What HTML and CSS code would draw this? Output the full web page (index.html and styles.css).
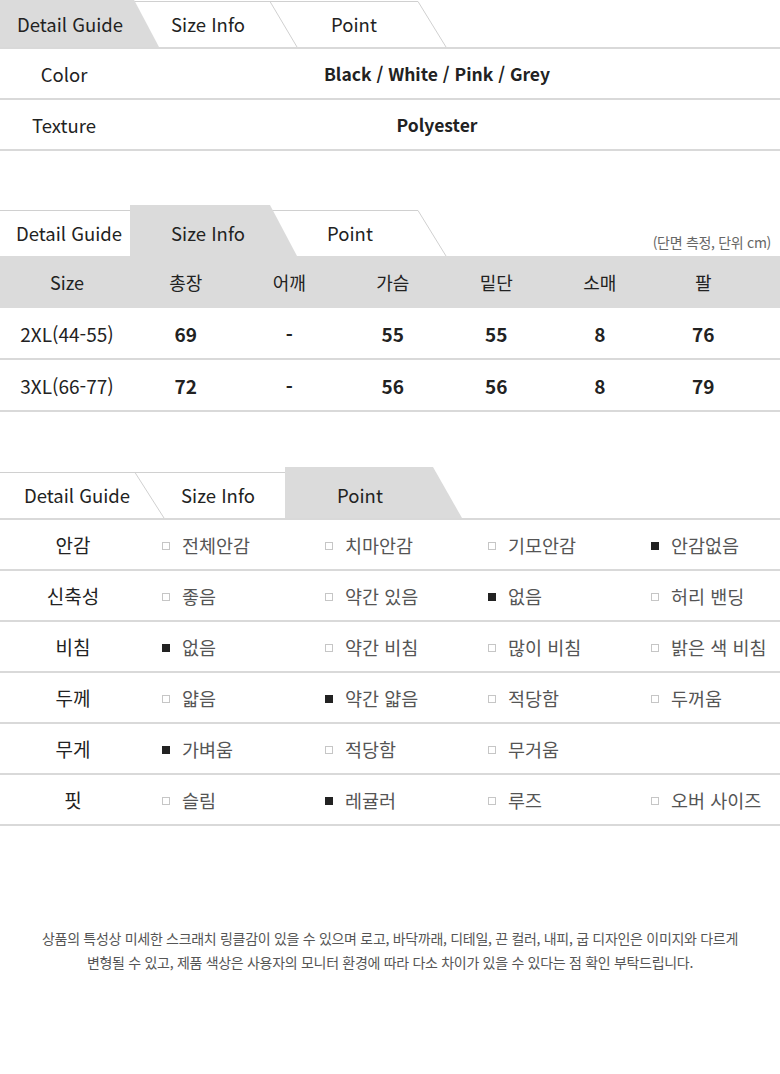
FILE: index.html
```html
<!DOCTYPE html>
<html lang="ko">
<head>
<meta charset="utf-8">
<title>Detail Guide</title>
<link rel="stylesheet" href="styles.css">
</head>
<body>
<div class="page">

  <section class="sec sec-detail">
    <div class="tabbar">
      <svg class="tabbg" width="780" height="51" viewBox="0 0 780 51" aria-hidden="true">
        <path class="tabline" d="M270 5.5 H418 L446 51"/>
        <path class="tabline" d="M132 5.5 H270 L297 51"/>
        <path class="tabfill" d="M0 0 H132 L159 51 H0 Z"/>
      </svg>
      <div class="tabs">
        <span class="tab t1">Detail Guide</span>
        <span class="tab t2">Size Info</span>
        <span class="tab t3">Point</span>
      </div>
    </div>
    <div class="info">
      <div class="info-row">
        <span class="info-label">Color</span>
        <span class="info-value">Black / White / Pink / Grey</span>
      </div>
      <div class="info-row">
        <span class="info-label">Texture</span>
        <span class="info-value">Polyester</span>
      </div>
    </div>
  </section>

  <section class="sec sec-size">
    <div class="tabbar">
      <svg class="tabbg" width="780" height="51" viewBox="0 0 780 51" aria-hidden="true">
        <path class="tabline" d="M270 5.5 H418 L446 51"/>
        <path class="tabline" d="M0 5.5 H140"/>
        <path class="tabfill" d="M130 0 H270 L297 51 H130 Z"/>
      </svg>
      <div class="tabs">
        <span class="tab t1">Detail Guide</span>
        <span class="tab t2">Size Info</span>
        <span class="tab t3">Point</span>
        <span class="note">(단면 측정, 단위 cm)</span>
      </div>
    </div>
    <div class="size-table">
      <div class="size-row size-head">
        <span class="head-en">Size</span><span>총장</span><span>어깨</span><span>가슴</span><span>밑단</span><span>소매</span><span>팔</span>
      </div>
      <div class="size-row">
        <span class="size-name">2XL(44-55)</span><span class="num">69</span><span class="num">-</span><span class="num">55</span><span class="num">55</span><span class="num">8</span><span class="num">76</span>
      </div>
      <div class="size-row">
        <span class="size-name">3XL(66-77)</span><span class="num">72</span><span class="num">-</span><span class="num">56</span><span class="num">56</span><span class="num">8</span><span class="num">79</span>
      </div>
    </div>
  </section>

  <section class="sec sec-point">
    <div class="tabbar">
      <svg class="tabbg" width="780" height="51" viewBox="0 0 780 51" aria-hidden="true">
        <path class="tabline" d="M135 5.5 H290"/>
        <path class="tabline" d="M0 5.5 H135 L164 51"/>
        <path class="tabfill" d="M285 0 H433 L462 51 H285 Z"/>
      </svg>
      <div class="tabs">
        <span class="tab t1">Detail Guide</span>
        <span class="tab t2">Size Info</span>
        <span class="tab t3">Point</span>
      </div>
    </div>
    <div class="point">
      <div class="point-row">
        <span class="point-label">안감</span>
        <span class="opt"><i class="cb"></i>전체안감</span>
        <span class="opt"><i class="cb"></i>치마안감</span>
        <span class="opt"><i class="cb"></i>기모안감</span>
        <span class="opt"><i class="cb on"></i>안감없음</span>
      </div>
      <div class="point-row">
        <span class="point-label">신축성</span>
        <span class="opt"><i class="cb"></i>좋음</span>
        <span class="opt"><i class="cb"></i>약간 있음</span>
        <span class="opt"><i class="cb on"></i>없음</span>
        <span class="opt"><i class="cb"></i>허리 밴딩</span>
      </div>
      <div class="point-row">
        <span class="point-label">비침</span>
        <span class="opt"><i class="cb on"></i>없음</span>
        <span class="opt"><i class="cb"></i>약간 비침</span>
        <span class="opt"><i class="cb"></i>많이 비침</span>
        <span class="opt"><i class="cb"></i>밝은 색 비침</span>
      </div>
      <div class="point-row">
        <span class="point-label">두께</span>
        <span class="opt"><i class="cb"></i>얇음</span>
        <span class="opt"><i class="cb on"></i>약간 얇음</span>
        <span class="opt"><i class="cb"></i>적당함</span>
        <span class="opt"><i class="cb"></i>두꺼움</span>
      </div>
      <div class="point-row">
        <span class="point-label">무게</span>
        <span class="opt"><i class="cb on"></i>가벼움</span>
        <span class="opt"><i class="cb"></i>적당함</span>
        <span class="opt"><i class="cb"></i>무거움</span>
        <span class="opt"></span>
      </div>
      <div class="point-row">
        <span class="point-label">핏</span>
        <span class="opt"><i class="cb"></i>슬림</span>
        <span class="opt"><i class="cb on"></i>레귤러</span>
        <span class="opt"><i class="cb"></i>루즈</span>
        <span class="opt"><i class="cb"></i>오버 사이즈</span>
      </div>
    </div>
  </section>

  <p class="notice">상품의 특성상 미세한 스크래치 링클감이 있을 수 있으며 로고, 바닥까래, 디테일, 끈 컬러, 내피, 굽 디자인은 이미지와 다르게<br>변형될 수 있고, 제품 색상은 사용자의 모니터 환경에 따라 다소 차이가 있을 수 있다는 점 확인 부탁드립니다.</p>

</div>
</body>
</html>
```

FILE: styles.css
```css
* {
  box-sizing: border-box;
  margin: 0;
  padding: 0;
}

body {
  margin: 0;
  background: #ffffff;
  font-family: "Noto Sans CJK KR", "Noto Sans", sans-serif;
  color: #222222;
}

.page {
  width: 780px;
  overflow: hidden;
}

/* ---------- tab bars ---------- */
.tabbar {
  position: relative;
  height: 51px;
}

.tabbg {
  position: absolute;
  left: 0;
  top: 0;
  display: block;
}

.tabline {
  fill: none;
  stroke: #d0d0d0;
  stroke-width: 1;
}

.tabfill {
  fill: #dbdbdb;
}

.tabs {
  position: relative;
  display: flex;
  height: 100%;
  padding-top: 5px;
}

.tab {
  display: flex;
  align-items: center;
  justify-content: center;
  font-size: 18.5px;
  line-height: 1;
  color: #222222;
  flex: none;
}

.sec-detail .t1 { width: 140px; }
.sec-detail .t2 { width: 136px; }
.sec-detail .t3 { width: 156px; }

.sec-size .t1 { width: 138px; }
.sec-size .t2 { width: 140px; }
.sec-size .t3 { width: 144px; }

.sec-point .t1 { width: 154px; }
.sec-point .t2 { width: 128px; }
.sec-point .t3 { width: 156px; }

.note {
  margin-left: auto;
  align-self: flex-end;
  padding: 0 9px 5px 0;
  font-size: 14px;
  line-height: 18px;
  color: #666666;
  letter-spacing: -0.3px;
}

/* ---------- section 1 ---------- */
.sec-detail {
  margin-top: -4px;
}

.info {
  border-top: 2px solid #d9d9d9;
}

.info-row {
  display: grid;
  grid-template-columns: 128px 618px;
  align-items: center;
  height: 51px;
  border-bottom: 2px solid #d9d9d9;
}

.info-label {
  text-align: center;
  font-size: 18.5px;
}

.info-value {
  text-align: center;
  font-size: 17.5px;
  font-weight: 700;
}

/* ---------- section 2 ---------- */
.sec-size {
  margin-top: 54px;
}

.size-row {
  display: grid;
  grid-template-columns: 134px repeat(6, 103.5px) 1fr;
  align-items: center;
  height: 52px;
  border-bottom: 2px solid #d9d9d9;
}

.size-row > span {
  text-align: center;
}

.size-head {
  background: #dbdbdb;
  border-bottom: none;
  font-size: 18px;
}

.size-head > .head-en {
  font-size: 18px;
}

.size-name {
  font-size: 19px;
}

.num {
  font-size: 19px;
  font-weight: 700;
}

/* ---------- section 3 ---------- */
.sec-point {
  margin-top: 55px;
}

.point {
  border-top: 2px solid #d9d9d9;
}

.point-row {
  display: grid;
  grid-template-columns: 146px 163px 163px 163px 1fr;
  align-items: center;
  height: 51px;
  border-bottom: 2px solid #d9d9d9;
}

.point-label {
  text-align: center;
  font-size: 19px;
  color: #222222;
}

.opt {
  display: flex;
  align-items: center;
  padding-left: 16px;
  font-size: 18.5px;
  color: #555555;
  white-space: nowrap;
}

.cb {
  display: inline-block;
  width: 8px;
  height: 8px;
  border: 1px solid #c6c6c6;
  background: #ffffff;
  margin-right: 12px;
  margin-top: 2px;
  flex: none;
}

.cb.on {
  background: #222222;
  border-color: #222222;
}

/* ---------- notice ---------- */
.notice {
  margin-top: 100px;
  text-align: center;
  font-size: 14px;
  line-height: 24px;
  letter-spacing: -0.3px;
  color: #555555;
}
```
